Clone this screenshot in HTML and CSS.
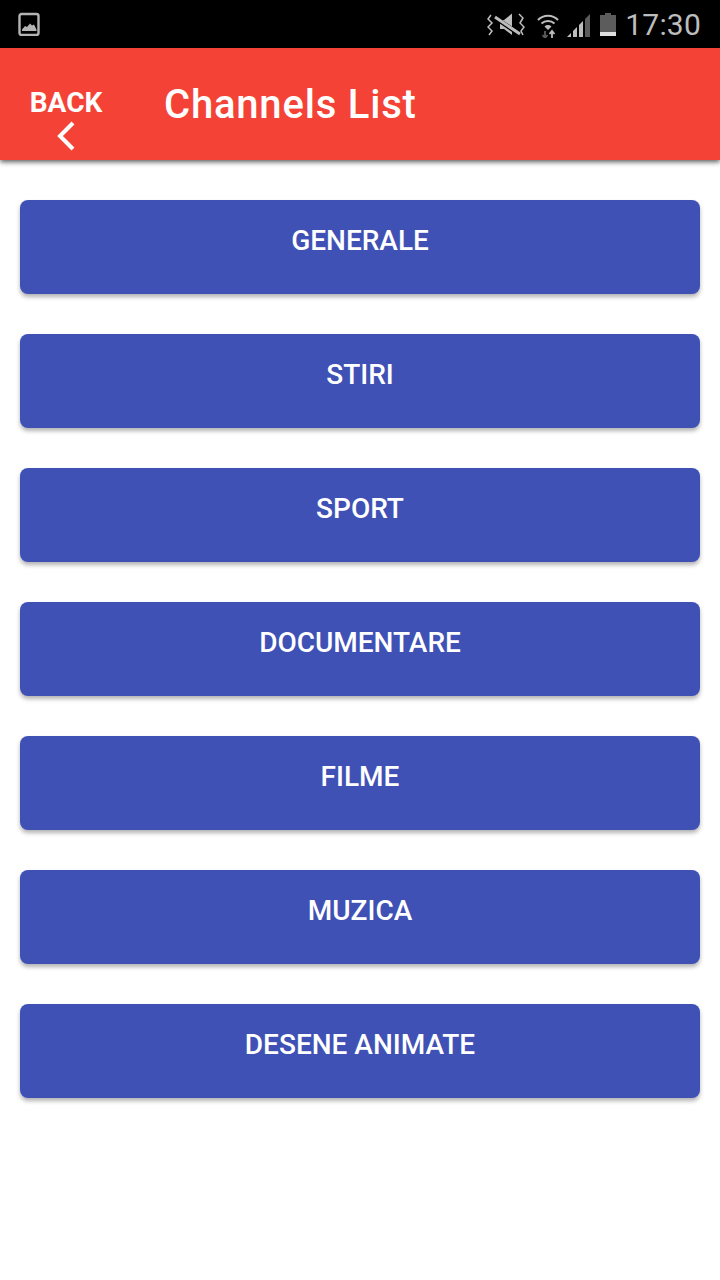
FILE: index.html
```html
<!DOCTYPE html>
<html lang="ro">
<head>
<meta charset="utf-8">
<title>Channels List</title>
<link rel="stylesheet" href="styles.css">
</head>
<body>
<div class="status">
  <svg class="pic" width="24" height="24" viewBox="0 0 24 24">
    <rect x="2.500" y="2" width="19" height="21" rx="2" fill="none" stroke="#b4b4b4" stroke-width="2.400"/>
    <path d="M5 17.500 L8 14 L10 15 L13 11.500 L15 13.500 L17 12.500 L19.500 17.500 V19 H5 Z" fill="#b4b4b4"/>
  </svg>
  <div class="status-right">
    <svg class="mute" width="38" height="26" viewBox="0 0 38 26">
      <path d="M13 8 H17 L25 1.500 V23 L17 17 H13 Z" fill="#bdbdbd"/>
      <path d="M7 5 L32 22" stroke="#000" stroke-width="4.500"/>
      <path d="M8 5 L33 22" stroke="#bdbdbd" stroke-width="3"/>
      <path d="M4 3 L1 7 L5 11 L1 15 L5 19 L2 23 M32 2 L36 6 L33 11 L37 15 L34 19 L36 23" fill="none" stroke="#bdbdbd" stroke-width="1.500"/>
    </svg>
    <svg class="wifi" width="22" height="26" viewBox="0 0 22 26">
      <path d="M1 8 A14 14 0 0 1 21 8 M4.500 11.500 A9.500 9.500 0 0 1 17.500 11.500" fill="none" stroke="#bdbdbd" stroke-width="2"/>
      <path d="M7.500 14.500 A5 5 0 0 1 14.500 14.500 L11 18 Z" fill="#bdbdbd"/>
      <path d="M8 19 V26 M5.500 23 L8 26 L10.500 23" fill="none" stroke="#5c5c5c" stroke-width="1.800"/>
      <path d="M15 26 V19 M12.500 22 L15 19 L17.500 22" fill="none" stroke="#bdbdbd" stroke-width="1.800"/>
    </svg>
    <svg class="signal" width="24" height="24" viewBox="0 0 24 24">
      <path d="M1 24 L5 20 V24 Z M7 24 V18 L11 14 V24 Z" fill="#bdbdbd"/>
      <path d="M13 24 V12 L17 8 V24 Z" fill="#bdbdbd"/>
      <path d="M19 24 V6 L24 1 V24 Z" fill="#5c5c5c"/>
    </svg>
    <svg class="battery" width="16" height="24" viewBox="0 0 16 24">
      <path d="M5 0 H11 V2 H16 V23 H0 V2 H5 Z" fill="#5c5c5c"/>
      <rect x="0" y="19" width="16" height="4" fill="#e0e0e0"/>
    </svg>
    <span class="clock">17:30</span>
  </div>
</div>
<header class="toolbar">
  <a class="back">
    <span class="back-label">BACK</span>
    <svg class="chevron" width="20" height="30" viewBox="0 0 20 30">
      <path d="M17 2 L4 15 L17 28" fill="none" stroke="#fff" stroke-width="4"/>
    </svg>
  </a>
  <h1 class="title">Channels List</h1>
</header>
<main class="list">
  <button class="channel">GENERALE</button>
  <button class="channel">STIRI</button>
  <button class="channel">SPORT</button>
  <button class="channel">DOCUMENTARE</button>
  <button class="channel">FILME</button>
  <button class="channel">MUZICA</button>
  <button class="channel">DESENE ANIMATE</button>
</main>
</body>
</html>
```
FILE: styles.css
```css
* { box-sizing: border-box; }
html, body { margin: 0; padding: 0; }
body {
  width: 720px;
  height: 1280px;
  background: #fff;
  font-family: Roboto, sans-serif;
  overflow: hidden;
}
.status {
  height: 48px;
  background: #000;
  display: flex;
  align-items: center;
  justify-content: space-between;
  padding: 0 19px 0 17px;
}
.pic { display: block; }
.status-right { display: flex; align-items: center; padding-top: 1px; }
.mute { margin-right: 12px; }
.wifi { margin-right: 7px; }
.signal { margin-right: 10px; }
.battery { margin-right: 9px; }
.clock {
  color: #bdbdbd;
  font-size: 30px;
  line-height: 48px;
  letter-spacing: 0.2px;
}
.toolbar {
  height: 112px;
  background: #f44336;
  display: flex;
  align-items: center;
  box-shadow: 0 2px 5px rgba(0,0,0,.65);
  position: relative;
}
.back {
  width: 132px;
  padding-top: 22px;
  display: flex;
  flex-direction: column;
  align-items: center;
  color: #fff;
}
.back-label {
  font-size: 28px;
  font-weight: 700;
  line-height: 32px;
}
.chevron { display: block; margin-top: 2px; margin-bottom: -7px; }
.title {
  margin: 2px 0 0 32px;
  font-size: 40px;
  font-weight: 500;
  color: #fff;
  line-height: 110px;
  letter-spacing: 0.8px;
}
.list {
  display: flex;
  flex-direction: column;
  gap: 40px;
  padding: 40px 20px 0;
}
.channel {
  height: 94px;
  border: 0;
  border-radius: 8px;
  background: #3f51b5;
  color: #fff;
  font-family: Roboto, sans-serif;
  font-size: 28px;
  font-weight: 500;
  line-height: 32px;
  padding: 25px 0 0;
  display: flex;
  justify-content: center;
  align-items: flex-start;
  box-shadow: 0 3px 4px rgba(0,0,0,.3);
}
```
